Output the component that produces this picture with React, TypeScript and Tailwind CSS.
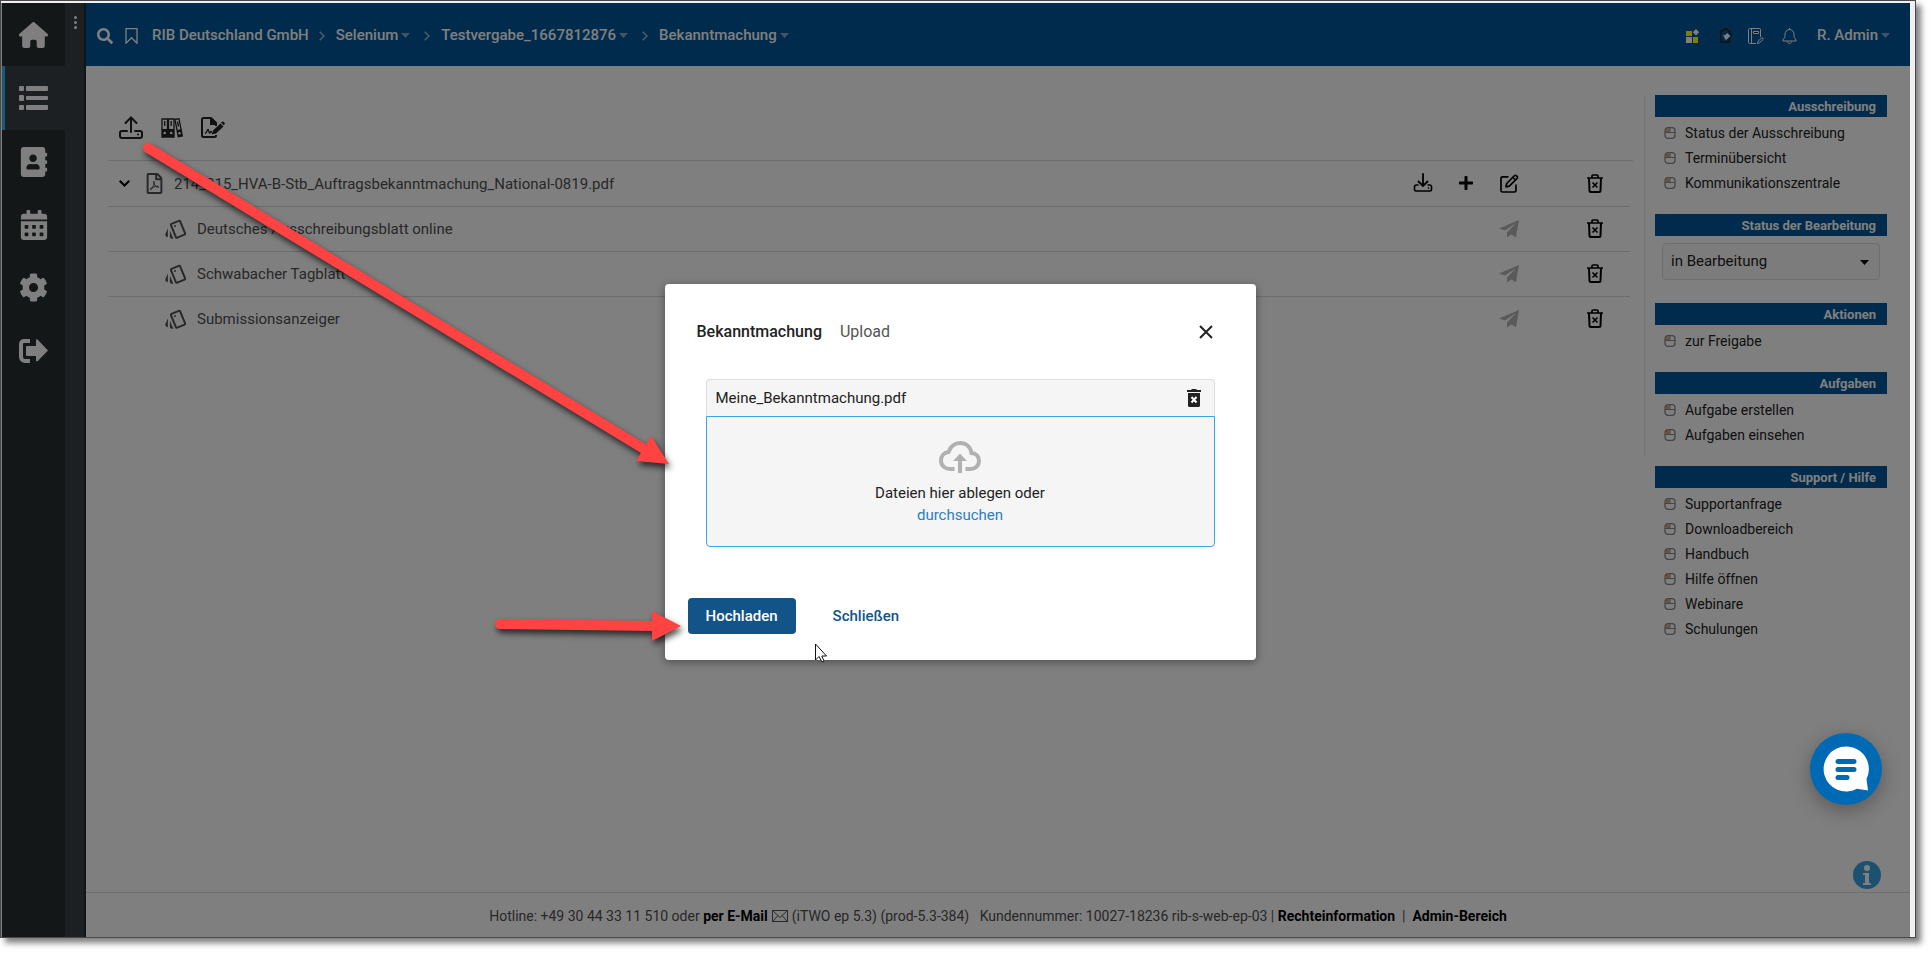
import type { ReactNode } from "react";
import { FaAddressBook, FaCalendarAlt, FaCog, FaPlus, FaRegFilePdf, FaSearch } from "react-icons/fa";
import { FaHouse } from "react-icons/fa6";
import { MdOutlineStyle } from "react-icons/md";

const navItems: { label: string; icon: ReactNode; active?: boolean }[] = [
  { label: "Start", icon: <FaHouse className="w-[29px] h-[26px]" /> },
  { label: "Liste", icon: <ListIcon />, active: true },
  { label: "Kontakte", icon: <FaAddressBook className="w-7 h-[30px]" /> },
  { label: "Kalender", icon: <FaCalendarAlt className="w-7 h-[30px]" /> },
  { label: "Einstellungen", icon: <FaCog className="w-[29px] h-[29px]" /> },
  { label: "Abmelden", icon: <LogoutIcon /> },
];

const newspapers = ["Deutsches Ausschreibungsblatt online", "Schwabacher Tagblatt", "Submissionsanzeiger"];

function ListIcon() {
  return (
    <svg className="w-[29px] h-6" viewBox="0 0 29 24" fill="currentColor" aria-hidden="true">
      <rect x="0" y="0" width="5" height="5" rx="1" />
      <rect x="7" y="0" width="22" height="5" rx="1" />
      <rect x="0" y="9" width="5" height="6" rx="1" />
      <rect x="7" y="10" width="22" height="4" rx="1" />
      <rect x="0" y="19" width="5" height="5" rx="1" />
      <rect x="7" y="19" width="22" height="5" rx="1" />
    </svg>
  );
}

function LogoutIcon() {
  return (
    <svg className="w-[29px] h-6" viewBox="0 0 29 24" aria-hidden="true">
      <path d="M11 2H5a3 3 0 0 0-3 3v13a4 4 0 0 0 4 4h5" fill="none" stroke="currentColor" strokeWidth="4" />
      <path d="M8 7h9V1.500c0-1 1-1.500 1.800-.8L29 11.500 18.800 22c-.8.700-1.800.300-1.800-.700V17H8a1 1 0 0 1-1-1V8a1 1 0 0 1 1-1z" fill="currentColor" />
    </svg>
  );
}

function UploadIcon() {
  return (
    <svg className="w-6 h-6" viewBox="0 0 24 24" fill="none" stroke="currentColor" strokeWidth="2" strokeLinecap="round" aria-hidden="true">
      <path d="M12 16V2M6.500 7 12 1.500 17.500 7" />
      <path d="M8 15H3a2 2 0 0 0-2 2v3a2 2 0 0 0 2 2h18a2 2 0 0 0 2-2v-3a2 2 0 0 0-2-2h-5" />
      <path d="M19 18.500v.1" />
    </svg>
  );
}

function DownloadIcon() {
  return (
    <svg className="w-5 h-5" viewBox="0 0 20 20" fill="none" stroke="currentColor" strokeWidth="1.800" strokeLinecap="round" aria-hidden="true">
      <path d="M10 1v11.500M5.500 8.500 10 13l4.500-4.500" />
      <path d="M5 12H3.500A2 2 0 0 0 1.500 14v2.500A1.500 1.500 0 0 0 3 18h14a1.500 1.500 0 0 0 1.500-1.500V14a2 2 0 0 0-2-2H15M15.500 15v.1" strokeWidth="1.600" />
    </svg>
  );
}

function EditIcon() {
  return (
    <svg className="w-[19px] h-[19px]" viewBox="0 0 19 19" fill="none" stroke="currentColor" strokeWidth="1.700" strokeLinejoin="round" aria-hidden="true">
      <path d="M8.500 2.800H2.500A1.500 1.500 0 0 0 1 4.300v12A1.500 1.500 0 0 0 2.500 18h12a1.500 1.500 0 0 0 1.500-1.500V10.500" />
      <path d="M6 12.800l.700-3.300 7.800-7.800a1.300 1.300 0 0 1 1.900 0l.700.700a1.300 1.300 0 0 1 0 1.900L9.300 12.100z" />
      <path d="m13 3.500 2.500 2.500" strokeWidth="1.200" />
    </svg>
  );
}

function PlaneIcon() {
  return (
    <svg className="w-5 h-[18px]" viewBox="0 0 20 18" fill="currentColor" aria-hidden="true">
      <path d="M0 8.500 20 0 17 17.300 12.300 14.500 8 17.500V12.500L17 3 6 10.500z" />
    </svg>
  );
}

function BindersIcon() {
  return (
    <svg className="w-[22px] h-5" viewBox="0 0 22 20" aria-hidden="true">
      <g fill="none" stroke="currentColor" strokeWidth="1.300">
        <path d="M1 1h5.500v18H1zM7.500 1H13v18H7.500z" />
        <path d="M14 1.500l4-.8 3.300 17.300-4 .8z" />
        <path d="M3.700 3v5M10.200 3v5M16.500 3.500l1 5" />
      </g>
      <path d="M1 11h5.500v8H1zM7.500 11H13v8H7.500zM16 12l4-.8L21.300 18l-4 .8z" fill="currentColor" />
      <g fill="#fff">
        <circle cx="3.700" cy="15" r="1.300" />
        <circle cx="10.200" cy="15" r="1.300" />
        <circle cx="18.500" cy="15.200" r="1.200" />
      </g>
    </svg>
  );
}

function FileSignIcon() {
  return (
    <svg className="w-6 h-[21px]" viewBox="0 0 24 21" aria-hidden="true">
      <path d="M15 18v.500a1.500 1.500 0 0 1-1.500 1.500h-11A1.500 1.500 0 0 1 1 18.500v-16A1.500 1.500 0 0 1 2.500 1H10l5 5v3" fill="none" stroke="currentColor" strokeWidth="2" />
      <path d="M9 1h2l5 5v2H9zM12 13.500l7.500-7 3 3L15 16.500l-3.500.800z" fill="currentColor" />
      <path d="m20 5.800 1.200-1a1 1 0 0 1 1.400 0l1 1.100a1 1 0 0 1 0 1.400l-.900.900z" fill="currentColor" />
      <path d="M4 16.500c2-.500 2-4 3-4s.500 3.500 1.500 3.500.800-1.500 1.500-1.500.800 2 2 2" fill="none" stroke="currentColor" strokeWidth="1.300" />
    </svg>
  );
}

function TrashIcon() {
  return (
    <svg className="w-4 h-[19px]" viewBox="0 0 16 19" fill="none" stroke="currentColor" strokeWidth="2" aria-hidden="true">
      <path d="M0 4h16M5 3.500V2a1 1 0 0 1 1-1h4a1 1 0 0 1 1 1v1.500" strokeWidth="1.700" />
      <path d="M2 4l.500 12.500A1.500 1.500 0 0 0 4 18h8a1.500 1.500 0 0 0 1.500-1.500L14 4" />
      <path d="m5.500 8.500 5 5M10.500 8.500l-5 5" strokeWidth="1.600" />
    </svg>
  );
}

function MouseIcon() {
  return (
    <svg className="w-3 h-3 shrink-0" viewBox="0 0 12 12" aria-hidden="true">
      <path d="M2 1.500h3.500v3.500H2z" fill="#d9a070" />
      <rect x="1" y=".700" width="10" height="10.600" rx="3" fill="none" stroke="#8a8a8a" strokeWidth="1.300" />
      <path d="M1 5.500h10M6 1v4.500" stroke="#8a8a8a" />
    </svg>
  );
}

function Caret({ className = "" }: { className?: string }) {
  return (
    <svg className={`w-[9px] h-[5px] ${className}`} viewBox="0 0 9 5" fill="currentColor" aria-hidden="true">
      <path d="M0 0h9L4.500 5z" />
    </svg>
  );
}

function Crumb({ children }: { children: string }) {
  return (
    <>
      <svg className="w-[6px] h-[10px] ml-[10px] mr-[11px] text-white/60" viewBox="0 0 6 10" fill="none" stroke="currentColor" strokeWidth="1.500" aria-hidden="true">
        <path d="m.700.700 4.300 4.300-4.300 4.300" />
      </svg>
      <button className="flex items-center gap-[3px] pr-1 font-medium">
        {children}
        <Caret className="text-white/50" />
      </button>
    </>
  );
}

function Sidebar() {
  return (
    <aside className="flex shrink-0">
      <nav className="w-[63px] bg-[#262e30] text-white">
        {navItems.map((item) => (
          <button
            key={item.label}
            aria-label={item.label}
            className={`flex w-full items-center justify-center border-l-[3px] pr-[3px] ${
              item.active ? "h-16 bg-[#384047] border-[#38b0f0]" : "h-[63px] border-transparent"
            }`}
          >
            {item.icon}
          </button>
        ))}
      </nav>
      <div className="w-[21px] bg-[#384047] border-r-2 border-[#222a30] pt-3">
        <button aria-label="Menü" className="flex w-full flex-col items-center gap-[2px] py-[1px] pl-[2px]">
          <span className="w-[3px] h-[3px] rounded-full bg-white" />
          <span className="w-[3px] h-[3px] rounded-full bg-white" />
          <span className="w-[3px] h-[3px] rounded-full bg-white" />
        </button>
      </div>
    </aside>
  );
}

function Header() {
  return (
    <header className="flex h-[63px] items-center justify-between bg-[#005699] pl-[11px] pr-5 pt-[2px] text-[15px] text-white">
      <div className="flex items-center">
        <button aria-label="Suche" className="mr-3">
          <FaSearch className="w-4 h-4" />
        </button>
        <button aria-label="Lesezeichen" className="mr-[14px]">
          <svg className="w-[13px] h-4" viewBox="0 0 13 16" fill="none" stroke="currentColor" aria-hidden="true">
            <path d="M1 .700h11v14.500l-5.500-5.500L1 15.200z" strokeWidth="1.300" />
          </svg>
        </button>
        <a href="#rib" className="font-medium">RIB Deutschland GmbH</a>
        <Crumb>Selenium</Crumb>
        <Crumb>Testvergabe_1667812876</Crumb>
        <Crumb>Bekanntmachung</Crumb>
      </div>
      <div className="flex items-center">
        <button aria-label="Module" className="mr-5">
          <svg className="w-[14px] h-[14px]" viewBox="0 0 14 14" aria-hidden="true">
            <path d="M0 2h6v5H0zM7 8h5v6H7z" fill="#ff0" />
            <path d="M0 8h6v6H0zM10 0l3.200 3.200L10 6.400 6.800 3.200z" fill="#fff" />
          </svg>
        </button>
        <button aria-label="Freigaben" className="mr-4">
          <svg className="w-3 h-[15px]" viewBox="0 0 12 15" aria-hidden="true">
            <path d="M.700 3h2L4.500.700h2L8.500 3h1v2l2 2-2 2v5H.700z" fill="none" stroke="#222" strokeWidth="1.500" />
            <path d="M3 6.500l2 1 2-2.500 3.500 3L6 12l-1.500-2z" fill="#fff" />
          </svg>
        </button>
        <button aria-label="Notizen" className="mr-[18px]">
          <svg className="w-4 h-4" viewBox="0 0 16 16" fill="none" stroke="currentColor" aria-hidden="true">
            <path d="M12.500 9V1.500a1 1 0 0 0-1-1h-10a1 1 0 0 0-1 1v13a1 1 0 0 0 1 1H8M3.500.500v15" />
            <path d="M5.500 3.500h5v2h-5z" fill="#111" />
            <path d="m9.500 15.500.700-2.500 4-3.500 1.300 1.500-4 3.800z" />
          </svg>
        </button>
        <button aria-label="Benachrichtigungen" className="mr-5">
          <svg className="w-[15px] h-4" viewBox="0 0 15 16" fill="none" stroke="currentColor" aria-hidden="true">
            <path d="M1 13v-1.500c1.500-1 2-2 2-5C3 3.500 5 1.500 7.500 1.500S12 3.500 12 6.500c0 3 .500 4 2 5V13zM7.500 0v1.500M5.500 13.500c0 1 1 2 2 2s2-1 2-2" />
          </svg>
        </button>
        <button className="flex items-center gap-[3px] font-medium">
          R. Admin
          <Caret className="text-white/50" />
        </button>
      </div>
    </header>
  );
}

function FileList() {
  return (
    <section className="flex-1 pl-[22px] pr-[11px]">
      <div className="flex h-[65px] items-center gap-[18px] pl-[11px] text-[#222]">
        <button aria-label="Hochladen"><UploadIcon /></button>
        <button aria-label="Ordner"><BindersIcon /></button>
        <button aria-label="Formular bearbeiten"><FileSignIcon /></button>
      </div>
      <div className="flex h-[46px] items-center border-t border-[#d9d9d9] pl-[11px] pr-[30px] text-[15px] text-[#505050]">
        <button aria-label="Zuklappen" className="text-black">
          <svg className="w-[11px] h-[7px]" viewBox="0 0 11 7" fill="none" stroke="currentColor" strokeWidth="2" aria-hidden="true">
            <path d="M.700.700 5.500 5.500 10.300.700" />
          </svg>
        </button>
        <FaRegFilePdf className="ml-4 mr-[11px] w-[17px] h-[21px]" />
        <span className="flex-1 pt-px">214_215_HVA-B-Stb_Auftragsbekanntmachung_National-0819.pdf</span>
        <div className="flex items-center pb-px text-black">
          <button aria-label="Herunterladen"><DownloadIcon /></button>
          <button aria-label="Hinzufügen" className="ml-[25px]"><FaPlus className="w-4 h-4" /></button>
          <button aria-label="Bearbeiten" className="ml-[26px]"><EditIcon /></button>
          <button aria-label="Löschen" className="ml-[68px]"><TrashIcon /></button>
        </div>
      </div>
      {newspapers.map((name) => (
        <div key={name} className="mr-[3px] flex h-[45px] items-center border-t border-[#d9d9d9] pl-[56px] pr-[27px] text-[15px] text-[#505050]">
          <MdOutlineStyle className="mr-[9px] w-6 h-6" />
          <span className="flex-1">{name}</span>
          <div className="flex items-center pb-px">
            <button aria-label="Senden" className="text-[#b4b4b4]"><PlaneIcon /></button>
            <button aria-label="Löschen" className="ml-[68px] text-black"><TrashIcon /></button>
          </div>
        </div>
      ))}
    </section>
  );
}

function Panel({ title, children }: { title: string; children: ReactNode }) {
  return (
    <section>
      <h2 className="h-[22px] bg-[#005699] px-[11px] text-right text-[13px] leading-[23px] font-bold text-white">{title}</h2>
      {children}
    </section>
  );
}

function LinkList({ items }: { items: string[] }) {
  return (
    <ul className="pt-[3px]">
      {items.map((item) => (
        <li key={item} className="flex h-[25px] items-center gap-[9px] pl-[9px]">
          <MouseIcon />
          <a href="#link" className="text-sm text-[#222]">{item}</a>
        </li>
      ))}
    </ul>
  );
}

function RightPanels() {
  return (
    <aside className="relative w-[266px] shrink-0 pl-[11px] pr-[23px]">
      <span className="absolute left-0 top-0 h-[362px] w-px bg-[#eaeaea]" />
      <div className="flex flex-col gap-[19px]">
        <Panel title="Ausschreibung">
          <LinkList items={["Status der Ausschreibung", "Terminübersicht", "Kommunikationszentrale"]} />
        </Panel>
        <Panel title="Status der Bearbeitung">
          <div className="relative px-[7px] pt-[7px] pb-1">
            <select aria-label="Status der Bearbeitung" className="block h-[37px] w-full appearance-none rounded-sm border border-[#ddd] bg-[#f9f9f9] px-2 text-[15px] text-[#222]">
              <option>in Bearbeitung</option>
            </select>
            <Caret className="pointer-events-none absolute right-[18px] top-[24px] text-black" />
          </div>
        </Panel>
        <Panel title="Aktionen">
          <LinkList items={["zur Freigabe"]} />
        </Panel>
        <Panel title="Aufgaben">
          <LinkList items={["Aufgabe erstellen", "Aufgaben einsehen"]} />
        </Panel>
        <Panel title="Support / Hilfe">
          <LinkList items={["Supportanfrage", "Downloadbereich", "Handbuch", "Hilfe öffnen", "Webinare", "Schulungen"]} />
        </Panel>
      </div>
    </aside>
  );
}

function Footer() {
  return (
    <footer className="flex h-[45px] items-center justify-center border-t border-[#dcdcdc] pt-[2px] text-sm text-[#505050]">
      <p className="flex items-center whitespace-pre">
        Hotline: +49 30 44 33 11 510 oder <a href="#mail" className="font-bold text-black">per E-Mail</a>
        <svg className="mx-1 w-4 h-3" viewBox="0 0 16 12" fill="none" stroke="#555" aria-hidden="true">
          <path d="M.500.500h15v11H.500zM.500.500 8 7.500l7.500-7M.500 11.500l5.500-6M15.500 11.500 10 5.500" />
        </svg>
        {"(iTWO ep 5.3) (prod-5.3-384)   Kundennummer: 10027-18236 rib-s-web-ep-03 | "}
        <a href="#recht" className="font-bold text-black">Rechteinformation</a>
        {"  |  "}
        <a href="#admin" className="font-bold text-black">Admin-Bereich</a>
      </p>
    </footer>
  );
}

function UploadDialog() {
  return (
    <div role="dialog" aria-labelledby="dialog-title" className="w-[591px] rounded-sm bg-white px-[23px] pt-[33px] pb-[26px] text-[15px] text-[#222] shadow-[0_2px_8px_rgba(0,0,0,0.4)]">
      <div className="flex h-[30px] items-center pl-[9px] pr-5 text-base">
        <h1 id="dialog-title" className="font-medium">Bekanntmachung</h1>
        <span className="ml-[18px] flex-1 text-[#555]">Upload</span>
        <button aria-label="Schließen">
          <svg className="w-[14px] h-[14px]" viewBox="0 0 14 14" fill="none" stroke="currentColor" strokeWidth="2" aria-hidden="true">
            <path d="m1 1 12 12M13 1 1 13" />
          </svg>
        </button>
      </div>
      <div className="mt-8 mx-[18px]">
        <div className="flex h-[37px] items-center justify-between rounded-t-sm border border-b-0 border-[#ddd] bg-[#f5f5f5] pl-[9px] pr-[13px]">
          Meine_Bekanntmachung.pdf
          <button aria-label="Datei entfernen">
            <svg className="w-[14px] h-[18px]" viewBox="0 0 14 18" aria-hidden="true">
              <path d="M4.500 1V0h5v1H14v2H0V1zM1 4h12v12.500a1.500 1.500 0 0 1-1.500 1.500h-9A1.500 1.500 0 0 1 1 16.500z" fill="currentColor" />
              <path d="m4.500 8 5 5.500M9.500 8l-5 5.500" stroke="#fff" strokeWidth="2" />
            </svg>
          </button>
        </div>
        <div className="flex h-[131px] flex-col items-center rounded-b-sm border border-[#38a5e8] bg-[#f5f5f5] pt-6 leading-[22px]">
          <svg className="mb-2 w-[42px] h-[33px]" viewBox="0 0 42 33" fill="none" stroke="#b0b0b0" strokeWidth="4" aria-hidden="true">
            <path d="M15.500 28H11C6 28 2 24.500 2 19.500 2 15 5 11.500 9.500 11 11.500 5.500 16 2 21 2c6 0 10.500 4 11.500 10C37 12.500 40 15.500 40 20c0 4.500-3.500 8-8 8h-5.500" />
            <path d="M21 32V17" />
            <path d="M21 12.500 28 20H14z" fill="#b0b0b0" stroke="none" />
          </svg>
          <span>Dateien hier ablegen oder</span>
          <button className="text-[#2b80bd]">durchsuchen</button>
        </div>
      </div>
      <div className="mt-[51px] flex">
        <button className="h-9 rounded bg-[#125487] px-[18px] font-medium text-white">Hochladen</button>
        <button className="ml-[19px] h-9 px-[18px] font-medium text-[#125487]">Schließen</button>
      </div>
    </div>
  );
}

function Annotations() {
  return (
    <svg className="pointer-events-none absolute left-0 top-0 z-30 h-[700px] w-[900px] drop-shadow-[2px_4px_3px_rgba(0,0,0,0.7)]" viewBox="0 0 900 700" fill="#ff4343" stroke="#ff4343" aria-hidden="true">
      <path d="M148 148 644 449" strokeWidth="10" strokeLinecap="round" />
      <path d="M651 436 669 464 636 461z" stroke="none" />
      <path d="M500 624 655 626" strokeWidth="10" strokeLinecap="round" />
      <path d="M652 611 681 626 652 641z" stroke="none" />
    </svg>
  );
}

export default function App() {
  return (
    <div className="relative flex min-h-screen bg-white pr-[15px] pb-[15px] font-[Roboto,sans-serif]">
      <div className="flex flex-1 border border-[#4a474a] bg-[#f0f0f0] pt-[2px] shadow-[5px_5px_6px_rgba(0,0,0,0.5)]">
        <div className="relative flex flex-1 border-l border-[#808080]">
          <Sidebar />
          <div className="flex flex-1 flex-col bg-white">
            <Header />
            <main className="flex flex-1 pt-[29px]">
              <FileList />
              <RightPanels />
            </main>
            <Footer />
          </div>
          <button aria-label="Information" className="absolute bottom-12 right-[29px]">
            <svg className="w-7 h-7" viewBox="0 0 28 28" aria-hidden="true">
              <circle cx="14" cy="14" r="14" fill="#38a5e0" />
              <circle cx="14" cy="7" r="3" fill="#fff" />
              <path d="M10 12h6v10h2v2h-8v-2h2v-8h-2z" fill="#fff" />
            </svg>
          </button>
          <div className="absolute inset-0 z-10 flex items-center justify-center bg-black/50 pl-2 pt-1">
            <UploadDialog />
          </div>
          <button aria-label="Chat" className="absolute bottom-[132px] right-7 z-20 flex h-[72px] w-[72px] items-center justify-center rounded-full bg-[#0069b4] shadow-[0_6px_20px_rgba(0,0,0,0.3)]">
            <svg className="w-[46px] h-[46px]" viewBox="0 0 46 46" aria-hidden="true">
              <path d="M23 .500a22.500 22.500 0 1 0 11 42.200l11 1.800-1.500-11.500A22.500 22.500 0 0 0 23 .500z" fill="#fff" />
              <path d="M15 15.500h16M15 23.500h16M15 31.500h9" stroke="#0069b4" strokeWidth="5" strokeLinecap="round" />
            </svg>
          </button>
        </div>
        <div className="w-[5px] shrink-0" />
      </div>
      <Annotations />
      <svg className="pointer-events-none absolute left-[815px] top-[643px] z-30 w-3 h-5" viewBox="0 0 12 20" aria-hidden="true">
        <path d="M.500 1v16l3.500-3.500L7 19l2-1-2.200-5H11.500z" fill="#fff" stroke="#111" />
      </svg>
    </div>
  );
}
